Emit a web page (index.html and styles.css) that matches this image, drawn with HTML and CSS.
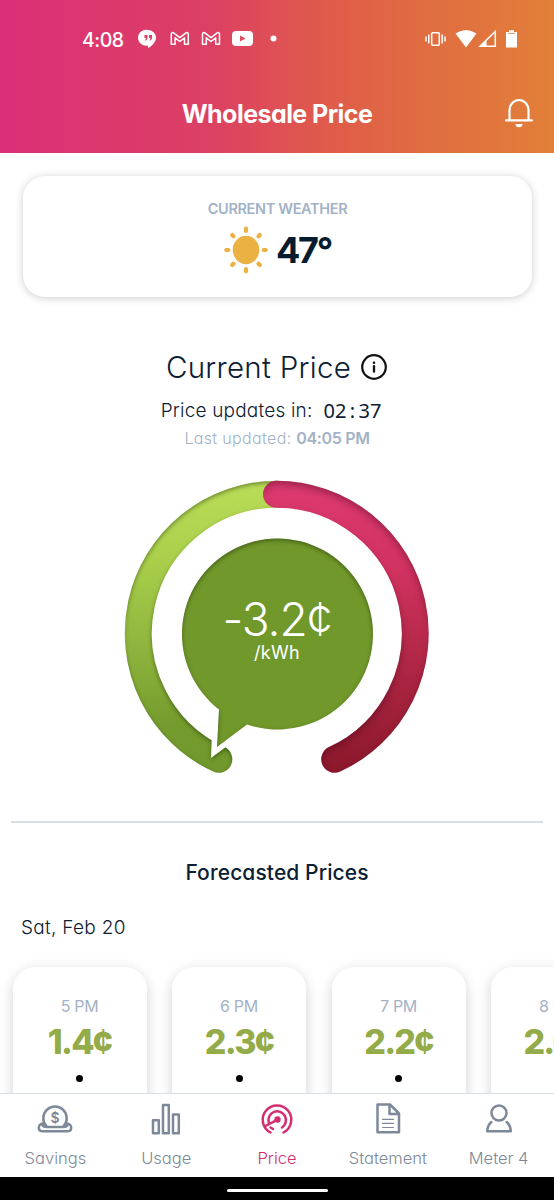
FILE: index.html
```html
<!DOCTYPE html>
<html lang="en">
<head>
    <meta charset="UTF-8">
    <meta name="viewport" content="width=device-width, initial-scale=1.0">
    <title>Wholesale Price</title>
    <link rel="stylesheet" href="styles.css">
</head>
<body>

    <header class="header">
        <div class="status-bar">
            <span class="clock">4:08</span>
            <svg class="status-left" width="140" height="22" viewBox="0 0 140 22">
                <path fill="#fff" d="M10 2a8 8 0 1 0 0 15.500v2.500c4-2 8-6 8-10.500a8 7.700 0 0 0-8-7.500z"/>
                <path fill="#dc4264" d="M6.500 7h3v3.500l-1.500 2h-1l1-2.500h-1.500zM11 7h3v3.500l-1.500 2h-1l1-2.500h-1.500z"/>
                <path class="mail" d="M33.300 16.200V6.200q0-2 2-1.500l6.500 5 6.500-5q2-.500 2 1.500v10h-3.800V9.800l-4.700 3.700-4.700-3.700v6.400z"/>
                <path class="mail" d="M64.500 16.200V6.200q0-2 2-1.500l6.500 5 6.500-5q2-.500 2 1.500v10h-3.800V9.800L73 13.500l-4.700-3.700v6.400z"/>
                <rect x="94" y="3" width="21" height="15" rx="4" fill="#fff"/>
                <path fill="#de4a5b" d="M102 7.500v6l5.500-3z"/>
                <circle cx="135.500" cy="10.500" r="3" fill="#fff"/>
            </svg>
            <svg class="status-right" width="94" height="22" viewBox="0 0 94 22">
                <rect x="6.700" y="4.700" width="7.600" height="12.600" rx="1" fill="none" stroke="#fff" stroke-width="1.500"/>
                <path fill="none" stroke="#fff" stroke-width="1.500" d="M1 8.500v5M3.800 6.500v9M17.200 6.500v9M20 8.500v5"/>
                <path fill="#fff" d="M30.500 5.500Q41-1.500 51.500 5.500L41 19.500z"/>
                <path fill="none" stroke="#fff" stroke-width="1.500" d="M55 18.200h15.300V3.500z"/>
                <path fill="#fff" d="M54 19l7.500-7.500V19z"/>
                <path fill="#fff" d="M81 4h3V2.300h5V4h3v15.500H81z"/>
                <path stroke="#e0743f" stroke-width=".8" d="M83 5.400h7"/>
            </svg>
        </div>
        <h1 class="title">Wholesale Price</h1>
        <svg class="bell" width="30" height="30" viewBox="0 0 30 30">
            <path fill="none" stroke="#fff" stroke-width="2.200" stroke-linecap="round" d="M2 22.300h26M5.500 22.300V12.500a9.500 10.500 0 0 1 19 0v9.800"/>
            <path fill="#fff" d="M11.500 26h7a3.500 3.200 0 0 1-7 0z"/>
        </svg>
    </header>

    <main class="content">
        <section class="weather">
            <h2 class="weather-label">CURRENT WEATHER</h2>
            <div class="weather-row">
                <svg width="44" height="48" viewBox="0 0 44 48">
                    <ellipse cx="22" cy="24" rx="13.300" ry="14.200" fill="#ebb142"/>
                    <path fill="none" stroke="#ebb142" stroke-width="4.200" stroke-linecap="round" d="M22 2.700v2.300M22 43v2.300M2.300 24h2M39.700 24h2M8.300 9l1.200 1.300M34.500 37.700l1.200 1.300M35.700 9l-1.200 1.300M9.500 37.700l-1.200 1.300"/>
                </svg>
                <span class="temp">47°</span>
            </div>
        </section>

        <section class="current">
            <div class="current-head">
                <h2 class="current-title">Current Price</h2>
                <svg width="28" height="28" viewBox="0 0 28 28">
                    <circle cx="14" cy="14" r="11.800" fill="none" stroke="#111" stroke-width="2.200"/>
                    <circle cx="14" cy="9.700" r="1.300" fill="#111"/>
                    <path d="M14 13.200v5.500" stroke="#111" stroke-width="2.300" stroke-linecap="round"/>
                </svg>
            </div>
            <div class="countdown">
                <span class="countdown-label">Price updates in:</span>
                <span class="timer">02<i>:</i>37</span>
            </div>
            <p class="last-updated">Last updated: <b>04:05 PM</b></p>

            <div class="gauge">
                <svg width="310" height="300" viewBox="0 0 310 300">
                    <defs>
                        <linearGradient id="low" gradientUnits="userSpaceOnUse" x1="0" y1="10" x2="0" y2="290">
                            <stop offset="0" stop-color="#b9dc56"/>
                            <stop offset=".25" stop-color="#aad04c"/>
                            <stop offset=".6" stop-color="#8db23c"/>
                            <stop offset=".85" stop-color="#749b2d"/>
                            <stop offset="1" stop-color="#70982c"/>
                        </linearGradient>
                        <linearGradient id="high" gradientUnits="userSpaceOnUse" x1="0" y1="10" x2="0" y2="290">
                            <stop offset="0" stop-color="#dc3970"/>
                            <stop offset=".3" stop-color="#d13260"/>
                            <stop offset=".6" stop-color="#b32847"/>
                            <stop offset="1" stop-color="#8c182c"/>
                        </linearGradient>
                        <!-- soft dark inner edge, light coming from below -->
                        <filter id="inset" x="-10%" y="-10%" width="120%" height="120%" color-interpolation-filters="sRGB">
                            <feComponentTransfer in="SourceAlpha"><feFuncA type="table" tableValues="1 0"/></feComponentTransfer>
                            <feGaussianBlur stdDeviation="2"/>
                            <feOffset dy="2" result="shade"/>
                            <feFlood flood-color="#0a2000" flood-opacity=".42" result="ink"/>
                            <feComposite in="ink" in2="shade" operator="in"/>
                            <feComposite in2="SourceAlpha" operator="in" result="edge"/>
                            <feMerge>
                                <feMergeNode in="SourceGraphic"/>
                                <feMergeNode in="edge"/>
                            </feMerge>
                        </filter>
                        <filter id="insetDark" x="-10%" y="-10%" width="120%" height="120%" color-interpolation-filters="sRGB">
                            <feComponentTransfer in="SourceAlpha"><feFuncA type="table" tableValues="1 0"/></feComponentTransfer>
                            <feGaussianBlur stdDeviation="3.500"/>
                            <feOffset dy="4" result="shade"/>
                            <feFlood flood-color="#300010" flood-opacity=".35" result="ink"/>
                            <feComposite in="ink" in2="shade" operator="in"/>
                            <feComposite in2="SourceAlpha" operator="in" result="edge"/>
                            <feMerge>
                                <feMergeNode in="SourceGraphic"/>
                                <feMergeNode in="edge"/>
                            </feMerge>
                        </filter>
                        <mask id="notch" maskUnits="userSpaceOnUse" x="0" y="0" width="310" height="300">
                            <rect width="310" height="300" fill="#fff"/>
                            <path d="M91 225L89 281L108 267L130 250z" fill="#000"/>
                        </mask>
                    </defs>
                    <g filter="url(#inset)">
                        <g mask="url(#notch)">
                            <path d="M155 17.200A139 139 0 0 0 96.800 282.300" fill="none" stroke="url(#low)" stroke-width="27" stroke-linecap="round"/>
                        </g>
                    </g>
                    <path filter="url(#insetDark)" d="M155 17.200A139 139 0 0 1 213.200 282.300" transform="translate(-.5)" fill="none" stroke="url(#high)" stroke-width="27" stroke-linecap="round"/>
                    <path filter="url(#inset)" d="M97 232.500A95.500 95.500 0 1 1 125 247.500L95 270z" fill="#71982b"/>
                </svg>
                <div class="reading">
                    <span class="reading-value">-3.2¢</span>
                    <span class="reading-unit">/kWh</span>
                </div>
            </div>
        </section>

        <section class="forecast">
            <h2 class="forecast-title">Forecasted Prices</h2>
            <p class="forecast-date">Sat, Feb 20</p>
            <div class="forecast-list">
                <div class="hour"><span class="hour-time">5 PM</span><span class="hour-price">1.4¢</span><span class="dot"></span></div>
                <div class="hour"><span class="hour-time">6 PM</span><span class="hour-price">2.3¢</span><span class="dot"></span></div>
                <div class="hour"><span class="hour-time">7 PM</span><span class="hour-price">2.2¢</span><span class="dot"></span></div>
                <div class="hour"><span class="hour-time">8 PM</span><span class="hour-price">2.0¢</span><span class="dot"></span></div>
            </div>
        </section>
    </main>

    <nav class="tabs">
        <a class="tab">
            <svg width="36" height="36" viewBox="0 0 36 36">
                <path d="M9.500 24.300A11.700 11.700 0 1 1 26.500 24.300"/>
                <path d="M6 21.500c-2.500 0-4.200 2-4.200 4.200s1.700 3.600 4.200 3.600h24c2.500 0 4.200-1.400 4.200-3.600s-1.700-4.200-4.200-4.200M5 22.500c1 2 2.500 2.500 4.500 2.500h17c2 0 3.500-.5 4.500-2.500"/>
                <text class="dollar" x="18" y="20.500" text-anchor="middle">$</text>
            </svg>
            <span>Savings</span>
        </a>
        <a class="tab">
            <svg width="36" height="36" viewBox="0 0 36 36">
                <path d="M5 18.300h5.800v12.900H5zM15 3h5.800v28.200H15zM25 12.500h5.800v18.700H25z"/>
            </svg>
            <span>Usage</span>
        </a>
        <a class="tab active">
            <svg width="36" height="36" viewBox="0 0 36 36">
                <path d="M11.500 30.500A14.300 14.300 0 1 1 24.500 30.500"/>
                <path d="M9.700 20.500A8.800 8.800 0 1 1 23 25.500"/>
                <path d="M6.500 24L19 17.300M11.500 25.500l2.500 1.500"/>
                <circle class="solid" cx="18.500" cy="17.500" r="3.200"/>
            </svg>
            <span>Price</span>
        </a>
        <a class="tab">
            <svg width="36" height="36" viewBox="0 0 36 36">
                <path d="M7.500 2.500h12.500l9 9v18.700H7.500zM19.500 3v9h9"/>
                <path class="thin" d="M12.500 17.300h11M12.500 21.300h11M12.500 25.500h11"/>
            </svg>
            <span>Statement</span>
        </a>
        <a class="tab">
            <svg width="36" height="36" viewBox="0 0 36 36">
                <circle cx="18" cy="11" r="7.500"/>
                <path d="M10.300 20c-2.800 2.500-4 5.500-4.100 9.300h23.600c-.1-3.800-1.300-6.800-4.100-9.300"/>
            </svg>
            <span>Meter 4</span>
        </a>
    </nav>

    <div class="system-bar"><span class="handle"></span></div>

</body>
</html>
```

FILE: styles.css
```css
* {
    box-sizing: border-box;
}

body {
    margin: 0;
    width: 554px;
    height: 1200px;
    overflow: hidden;
    display: flex;
    flex-direction: column;
    background-color: #fff;
    color: #0c2033;
    font-family: Inter, Lato, sans-serif;
    font-feature-settings: "cv11"; /* single-storey a */
}

h1, h2, p {
    margin: 0;
    font-weight: 400;
}

svg {
    display: block;
    flex-shrink: 0;
}

/* Header */
.header {
    height: 153px;
    flex-shrink: 0;
    position: relative;
    color: #fff;
    background: linear-gradient(90deg, #db2f78, #dc4063 38%, #df5a4b 58%, #e06c41 76%, #e27f39);
}

.status-bar {
    display: flex;
    padding: 28px 35px 0 82px;
    height: 52px;
}

.clock {
    width: 56px;
    font-size: 19.5px;
    line-height: 24px;
    font-weight: 500;
    letter-spacing: -0.5px;
}

.status-right {
    margin-left: auto;
}

.mail {
    fill: none;
    stroke: #fff;
    stroke-width: 1.5;
    stroke-linejoin: round;
}

.title {
    padding-top: 47px;
    text-align: center;
    font-size: 25px;
    line-height: 30px;
    font-weight: 650;
    letter-spacing: -0.55px;
}

.bell {
    position: absolute;
    top: 98px;
    right: 20px;
}

/* Scrolling content */
.content {
    flex: 1;
    min-height: 0;
    overflow: hidden;
}

.weather {
    height: 121px;
    margin: 23px 22px 0 23px;
    padding-top: 22px;
    border-radius: 22px;
    box-shadow: 0 1px 9px rgba(0, 0, 0, 0.2);
    text-align: center;
}

.weather-label {
    font-size: 14.5px;
    line-height: 22px;
    font-weight: 600;
    letter-spacing: -0.35px;
    color: #a3b2c6;
}

.weather-row {
    display: flex;
    justify-content: center;
    align-items: center;
    gap: 8px;
    height: 60px;
}

.temp {
    font-size: 36px;
    font-weight: 750;
    letter-spacing: -2.2px;
    color: #061b2e;
}

.current {
    display: flex;
    flex-direction: column;
    align-items: center;
    margin: 50px 11px 0;
    height: 476px;
    border-bottom: 2px solid #d8dfe4;
}

.current-head {
    display: flex;
    align-items: center;
    gap: 9px;
    height: 40px;
}

.current-title {
    font-size: 29.5px;
    font-weight: 300;
    letter-spacing: 0.3px;
}

.countdown {
    display: flex;
    align-items: center;
    gap: 11px;
    height: 46px;
    margin-right: 12px;
}

.countdown-label {
    font-size: 19px;
    font-weight: 350;
    letter-spacing: 0.2px;
}

.timer {
    font-family: "Noto Sans", sans-serif;
    font-size: 20px;
}

.timer i {
    display: inline-block;
    width: 12px;
    text-align: center;
    font-style: normal;
}

.last-updated {
    margin-top: -5px;
    font-size: 16px;
    line-height: 20px;
    color: #a3b2c6;
    font-weight: 350;
    letter-spacing: 0.35px;
}

.last-updated b {
    font-weight: 600;
    letter-spacing: -0.35px;
}

.gauge {
    display: grid;
    margin-top: 29px;
}

.gauge > * {
    grid-area: 1 / 1;
}

.reading {
    z-index: 1;
    display: flex;
    flex-direction: column;
    align-items: center;
    padding-top: 114px;
    color: #fff;
}

.reading-value {
    font-size: 46px;
    line-height: 56px;
    font-weight: 300;
    letter-spacing: -1px;
}

.reading-unit {
    margin-top: -4px;
    font-size: 18px;
    line-height: 20px;
    letter-spacing: 0.3px;
}

/* Forecast */
.forecast-title {
    padding-top: 35px;
    text-align: center;
    font-size: 21px;
    line-height: 30px;
    font-weight: 550;
    letter-spacing: 0.1px;
}

.forecast-date {
    padding: 25px 21px 0;
    font-size: 19px;
    line-height: 30px;
    font-weight: 350;
    letter-spacing: 0.3px;
}

.forecast-list {
    display: flex;
    gap: 25.5px;
    padding: 24px 0 0 12.5px;
}

.hour {
    display: flex;
    flex-direction: column;
    align-items: center;
    flex: 0 0 134px;
    height: 180px;
    padding-top: 28px;
    border-radius: 22px;
    box-shadow: 0 4px 14px rgba(0, 0, 0, 0.18);
}

.hour-time {
    font-size: 16px;
    line-height: 22px;
    letter-spacing: -0.3px;
    color: #a3b2c6;
}

.hour-price {
    margin-top: 5px;
    font-size: 34px;
    line-height: 40px;
    font-weight: 800;
    letter-spacing: -1.8px;
    color: #93ab48;
}

.dot {
    width: 7px;
    height: 7px;
    margin-top: 13px;
    border-radius: 50%;
    background-color: #000;
}

/* Bottom tabs */
.tabs {
    display: grid;
    grid-template-columns: repeat(5, 1fr);
    height: 84px;
    flex-shrink: 0;
    border-top: 1px solid #d9dfe7;
    background-color: #fff;
}

.tab {
    display: flex;
    flex-direction: column;
    align-items: center;
    padding-top: 8px;
    font-size: 16.5px;
    line-height: 24px;
    font-weight: 350;
    color: #7d8998;
}

.tab span {
    margin-top: 8px;
}

.tab svg {
    fill: none;
    stroke: currentColor;
    stroke-width: 2.5;
    stroke-linecap: round;
    stroke-linejoin: round;
}

.tab .thin {
    stroke-width: 1.2;
}

.tab .solid,
.tab .dollar {
    fill: currentColor;
    stroke: none;
}

.tab .dollar {
    font-size: 14px;
    font-weight: 600;
}

.tab.active {
    color: #d42d71;
}

.system-bar {
    display: flex;
    justify-content: center;
    align-items: center;
    height: 23px;
    flex-shrink: 0;
    padding-top: 3px;
    background-color: #000;
}

.handle {
    width: 101px;
    height: 3px;
    border-radius: 2px;
    background-color: #fff;
}
```
